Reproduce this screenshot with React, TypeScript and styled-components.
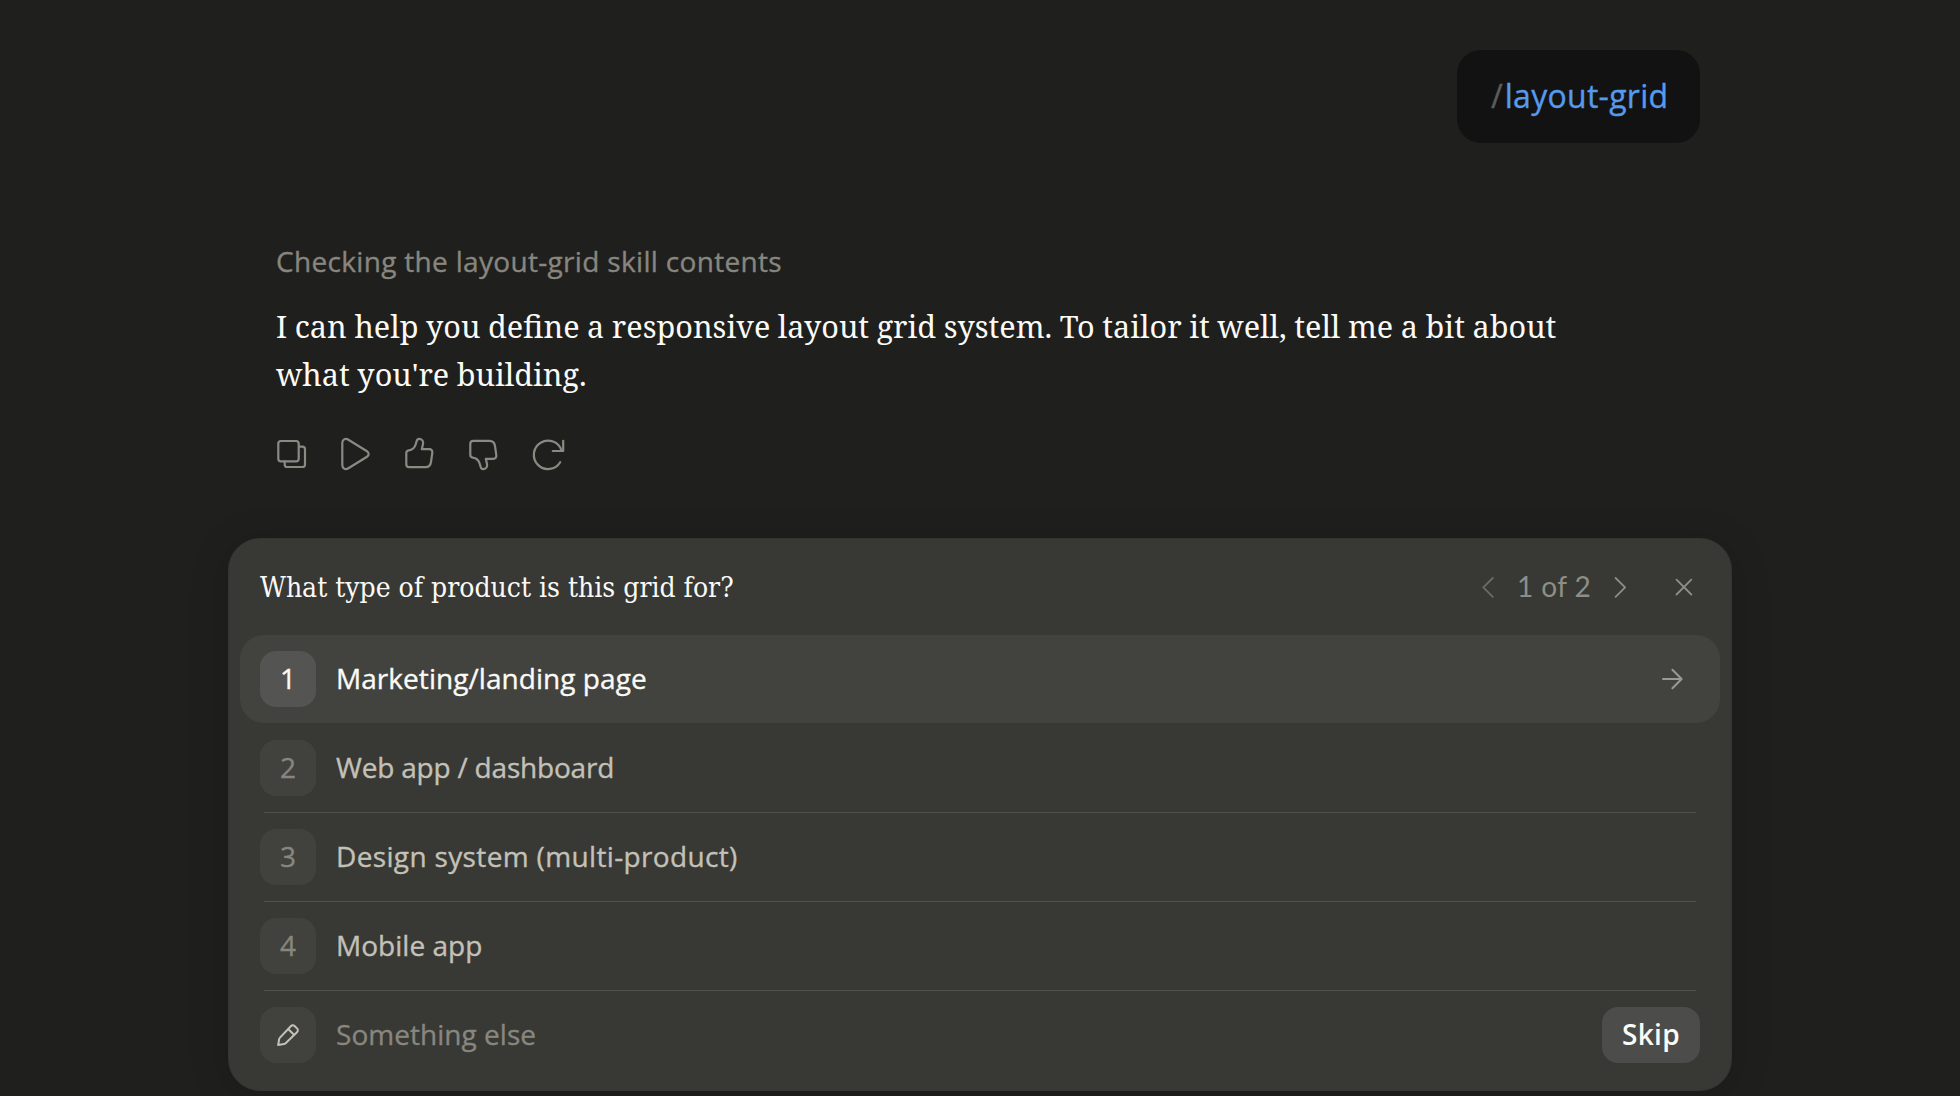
import React from "react";
import styled, { createGlobalStyle } from "styled-components";

const SANS = `"Open Sans", "Noto Sans", sans-serif`;
const SERIF = `"Noto Serif", "DejaVu Serif Condensed", "DejaVu Serif", serif`;

const GlobalStyle = createGlobalStyle`
  * { box-sizing: border-box; }
  body {
    margin: 0;
    background: #1f1f1d;
    overflow: hidden;
  }
  button {
    border: 0;
    background: none;
    padding: 0;
    color: inherit;
    font: inherit;
  }
`;

const Page = styled.main`
  width: 1960px;
  height: 1096px;
  overflow: hidden;
  background: #1f1f1d;
  color: #fafaf7;
  font-family: ${SANS};
  -webkit-text-stroke: 0.35px;
  display: flex;
  flex-direction: column;
  align-items: center;
`;

const Thread = styled.section`
  width: 1440px;
  height: 538px;
  flex: none;
  padding-top: 50px;
  display: flex;
  flex-direction: column;
`;

const Bubble = styled.div`
  align-self: flex-end;
  width: 243px;
  height: 93px;
  padding: 0 0 2px 34px;
  border-radius: 24px;
  background: #121212;
  display: flex;
  align-items: center;
  font-size: 32px;
`;

const Slash = styled.span`
  color: #5c5c5a;
  margin-right: 2px;
`;

const Command = styled.span`
  color: #569aec;
  letter-spacing: 0.28px;
`;

const Reply = styled.article`
  margin-top: 97px;
  padding-left: 16px;
`;

const Status = styled.div`
  font-size: 28px;
  line-height: 42px;
  letter-spacing: 0.32px;
  color: #87867f;
`;

const Answer = styled.p`
  margin: 20px 0 0;
  width: 1340px;
  font-family: ${SERIF};
  font-size: 30.6px;
  line-height: 48px;
  word-spacing: -0.38px;
  -webkit-text-stroke: 0;
`;

const Actions = styled.div`
  display: flex;
  margin: 24px 0 0 -16px;
`;

const ActionButton = styled.button`
  width: 64px;
  height: 64px;
  display: grid;
  place-items: center;
  color: #8b8a82;
`;

const Card = styled.section`
  flex: none;
  width: 1504px;
  height: 553px;
  padding: 0 11px;
  border: 1px solid #343431;
  border-radius: 32px;
  background: #383834;
  box-shadow: 0 6px 40px rgba(0, 0, 0, 0.16);
`;

const CardHeader = styled.header`
  height: 96px;
  padding: 0 24px 0 20px;
  display: flex;
  align-items: center;
`;

const Question = styled.h2`
  flex: 1;
  margin: 0;
  padding-top: 2px;
  font: 400 28px/42px "DejaVu Serif Condensed", "DejaVu Serif", serif;
  -webkit-text-stroke: 0;
`;

const Pager = styled.div`
  display: flex;
  align-items: center;
  color: #8f8e86;
`;

const PageCount = styled.span`
  width: 108px;
  padding-bottom: 2px;
  text-align: center;
  font: 400 28px/42px Lato, ${SANS};
  letter-spacing: 0.4px;
  -webkit-text-stroke: 0;
`;

const PagerButton = styled.button<{ $dim?: boolean; $gap?: number }>`
  width: 24px;
  height: 24px;
  margin-left: ${(p) => p.$gap ?? 0}px;
  display: grid;
  place-items: center;
  opacity: ${(p) => (p.$dim ? 0.6 : 1)};
`;

const Options = styled.ul`
  list-style: none;
  margin: 0;
  padding: 0;
`;

const Option = styled.li<{ $active?: boolean; $muted?: boolean }>`
  height: 88px;
  padding: 0 20px;
  border-radius: 24px;
  display: flex;
  align-items: center;
  background: ${(p) => (p.$active ? "#42423e" : "transparent")};
  color: ${(p) => (p.$active ? "#fafaf7" : p.$muted ? "#87867f" : "#c3c1b8")};
`;

const Divider = styled.li<{ $hidden?: boolean }>`
  height: 1px;
  margin: 0 24px;
  background: ${(p) => (p.$hidden ? "transparent" : "#50504c")};
`;

const Key = styled.span<{ $active?: boolean; $icon?: boolean }>`
  width: 56px;
  height: 56px;
  margin-right: 20px;
  padding-bottom: ${(p) => (p.$icon ? 0 : 2)}px;
  border-radius: 16px;
  display: grid;
  place-items: center;
  font-size: 28px;
  line-height: 40px;
  background: ${(p) => (p.$active ? "#545452" : "#41413d")};
  color: ${(p) => (p.$active ? "#fafaf7" : p.$icon ? "#c3c1b8" : "#87867f")};
`;

const Label = styled.span<{ $tracking: number }>`
  flex: 1;
  padding-bottom: 2px;
  font-size: 28px;
  line-height: 40px;
  letter-spacing: ${(p) => p.$tracking}px;
`;

const ArrowSlot = styled.span`
  width: 24px;
  height: 24px;
  margin-right: 16px;
  color: #9b9a92;
`;

const SkipButton = styled.button`
  width: 98px;
  height: 56px;
  padding-bottom: 2px;
  border-radius: 16px;
  background: #4c4c4a;
  color: #fafaf7;
  font: 600 28px/40px ${SANS};
  letter-spacing: 0.3px;
  -webkit-text-stroke: 0;
`;

const Svg = styled.svg<{ $size: number; $stroke?: number }>`
  display: block;
  width: ${(p) => p.$size}px;
  height: ${(p) => p.$size}px;
  fill: none;
  stroke: currentColor;
  stroke-width: ${(p) => p.$stroke ?? 2};
  stroke-linecap: round;
  stroke-linejoin: round;
`;

const THUMB =
  "M6.3 19C6.3 17.5 7.3 16.6 8.8 16.4C12.8 16 14.8 13.5 15.8 10L16.6 7.2C17.2 5.2 18.2 4.7 19.4 4.8C22.2 5 23.6 7.4 23 10L21.8 15.2H29.3C31.5 15.2 32.6 16.8 32.3 18.8L31 28C30.5 31.5 29 33.2 25.5 33.2H9.3C7.3 33.2 6.3 32.2 6.3 30.2Z";

const actions = [
  {
    label: "Copy",
    art: (
      <>
        <rect x="6.3" y="7" width="20.4" height="20.4" rx="2.6" />
        <path d="M27 12.7H30.4A2.6 2.6 0 0 1 33 15.3V30.4A2.6 2.6 0 0 1 30.4 33H15.3A2.6 2.6 0 0 1 12.7 30.4V27.4" />
      </>
    ),
  },
  {
    label: "Play",
    art: <path d="M6.3 9C6.3 5.6 9.3 3.9 12 5.5L31 17.2C33.2 18.6 33.2 21.4 31 22.8L12 34.5C9.3 36.1 6.3 34.4 6.3 31Z" />,
  },
  { label: "Good response", art: <path d={THUMB} /> },
  { label: "Bad response", art: <path d={THUMB} transform="matrix(1 0 0 -1 0 40)" /> },
  {
    label: "Retry",
    art: (
      <>
        <path d="M32.2 28.2A14.2 14.2 0 1 1 33.6 16.6" />
        <path d="M35.2 6.8V17H24.8" />
      </>
    ),
  },
];

const options = [
  { text: "Marketing/landing page", tracking: 0.05 },
  { text: "Web app / dashboard", tracking: -0.2 },
  { text: "Design system (multi-product)", tracking: 0.35 },
  { text: "Mobile app", tracking: 0.02 },
];

export default function App() {
  return (
    <>
      <GlobalStyle />
      <Page>
        <Thread>
          <Bubble>
            <Slash>/</Slash>
            <Command>layout-grid</Command>
          </Bubble>
          <Reply>
            <Status>Checking the layout-grid skill contents</Status>
            <Answer>
              I can help you define a responsive layout grid system. To tailor it well, tell me a bit about what
              you're building.
            </Answer>
            <Actions>
              {actions.map((a) => (
                <ActionButton key={a.label} aria-label={a.label}>
                  <Svg $size={40} $stroke={2.2} viewBox="0 0 40 40">{a.art}</Svg>
                </ActionButton>
              ))}
            </Actions>
          </Reply>
        </Thread>
        <Card>
          <CardHeader>
            <Question>What type of product is this grid for?</Question>
            <Pager>
              <PagerButton $dim aria-label="Previous">
                <Svg $size={24} $stroke={1.8} viewBox="0 0 24 24"><path d="M16.8 3L7.3 12.4L16.8 21.8" /></Svg>
              </PagerButton>
              <PageCount>1 of 2</PageCount>
              <PagerButton aria-label="Next">
                <Svg $size={24} $stroke={1.8} viewBox="0 0 24 24"><path d="M7.6 3L17.1 12.4L7.6 21.8" /></Svg>
              </PagerButton>
              <PagerButton $gap={40} aria-label="Close">
                <Svg $size={24} $stroke={1.8} viewBox="0 0 24 24"><path d="M4.5 4.7L19.3 19.5M19.3 4.7L4.5 19.5" /></Svg>
              </PagerButton>
            </Pager>
          </CardHeader>
          <Options>
            {options.map((o, i) => (
              <React.Fragment key={o.text}>
                <Option $active={i === 0}>
                  <Key $active={i === 0}>{i + 1}</Key>
                  <Label $tracking={o.tracking}>{o.text}</Label>
                  {i === 0 && (
                    <ArrowSlot>
                      <Svg $size={24} viewBox="0 0 24 24"><path d="M3 12H21.4M12.4 2.7L21.6 12L12.4 21.3" /></Svg>
                    </ArrowSlot>
                  )}
                </Option>
                <Divider $hidden={i === 0} />
              </React.Fragment>
            ))}
            <Option $muted>
              <Key $icon>
                <Svg $size={24} viewBox="0 0 24 24">
                  <path d="M2.2 22L3.1 16.3C3.2 15.6 3.5 15.1 4 14.6L14.8 3.3C16 2 17.6 2 18.8 3.2L21 5.4C22.2 6.6 22.2 8 21 9.2L9.6 20.2C9.1 20.7 8.6 21 7.9 21.1Z" />
                  <path d="M12.4 6.2L18 11.8" />
                </Svg>
              </Key>
              <Label $tracking={0.04}>Something else</Label>
              <SkipButton>Skip</SkipButton>
            </Option>
          </Options>
        </Card>
      </Page>
    </>
  );
}
